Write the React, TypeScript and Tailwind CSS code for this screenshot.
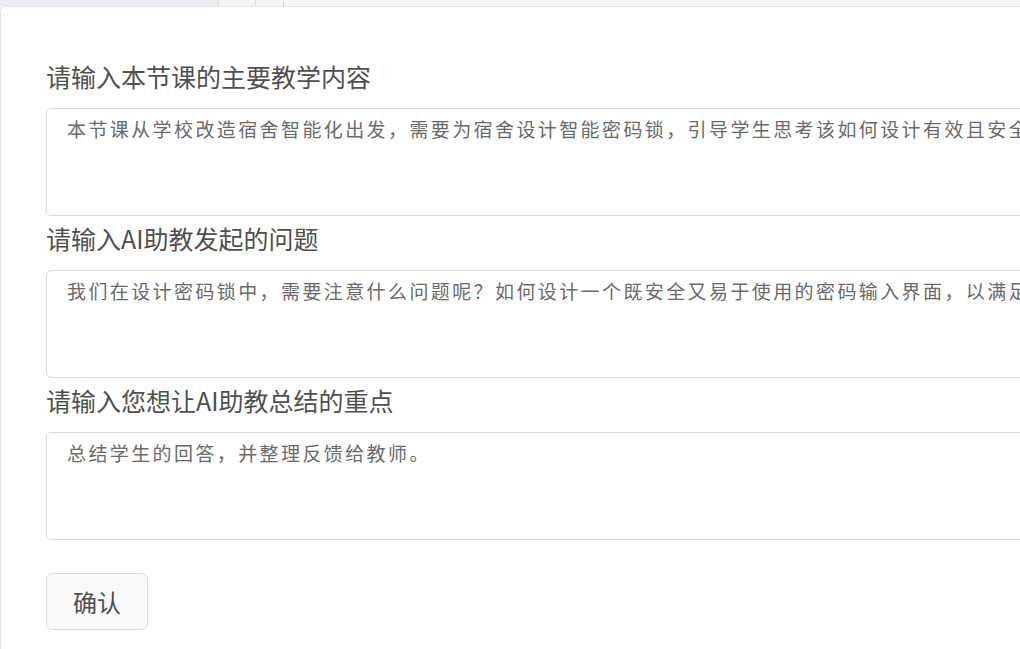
import React from 'react';

const fields = [
  {
    label: '请输入本节课的主要教学内容',
    value: '本节课从学校改造宿舍智能化出发，需要为宿舍设计智能密码锁，引导学生思考该如何设计有效且安全的密码锁。',
  },
  {
    label: '请输入AI助教发起的问题',
    value: '我们在设计密码锁中，需要注意什么问题呢？如何设计一个既安全又易于使用的密码输入界面，以满足用户的需求？',
  },
  {
    label: '请输入您想让AI助教总结的重点',
    value: '总结学生的回答，并整理反馈给教师。',
  },
];

export default function App() {
  return (
    <div className="w-screen h-screen overflow-hidden bg-[#f4f4f5] flex flex-col font-['Noto_Sans_CJK_SC',sans-serif]">
      {/* tabs strip */}
      <div className="h-[6px] flex shrink-0">
        <div className="w-[219px] bg-[#eceef3] border-r border-[#dcdcdc]" />
        <div className="w-[37px] bg-[#f6f6f6] border-r border-[#dcdcdc]" />
        <div className="w-[28px] bg-[#f6f6f6] border-r border-[#d4d4d4]" />
        <div className="flex-1 bg-[#f7f7f7]" />
      </div>

      {/* card */}
      <div className="flex-1 bg-white border-t border-l border-[#e6e6e6] rounded-tl-[6px] pt-[53px] pl-[45px]">
        <div className="flex flex-col">
          {fields.map((f, i) => (
            <div key={i} className={i > 0 ? 'mt-[6px]' : ''}>
              <h2 className="text-[25px] leading-[32px] text-[#505050] font-normal mb-4">{f.label}</h2>
              <textarea
                readOnly
                value={f.value}
                className="block w-[1300px] h-[108px] resize-none border border-[#dcdcdc] rounded-[5px] pl-[20px] pr-5 pt-[6px] text-[19px] leading-[28px] tracking-[2.4px] text-[#6a6a6a] font-normal outline-none bg-white"
              />
            </div>
          ))}
        </div>

        <button
          type="button"
          className="mt-[33px] w-[102px] h-[57px] bg-[#f9f9f9] border border-[#dcdcdc] rounded-[6px] text-[24px] text-[#4d4d4d]"
        >
          确认
        </button>
      </div>
    </div>
  );
}
